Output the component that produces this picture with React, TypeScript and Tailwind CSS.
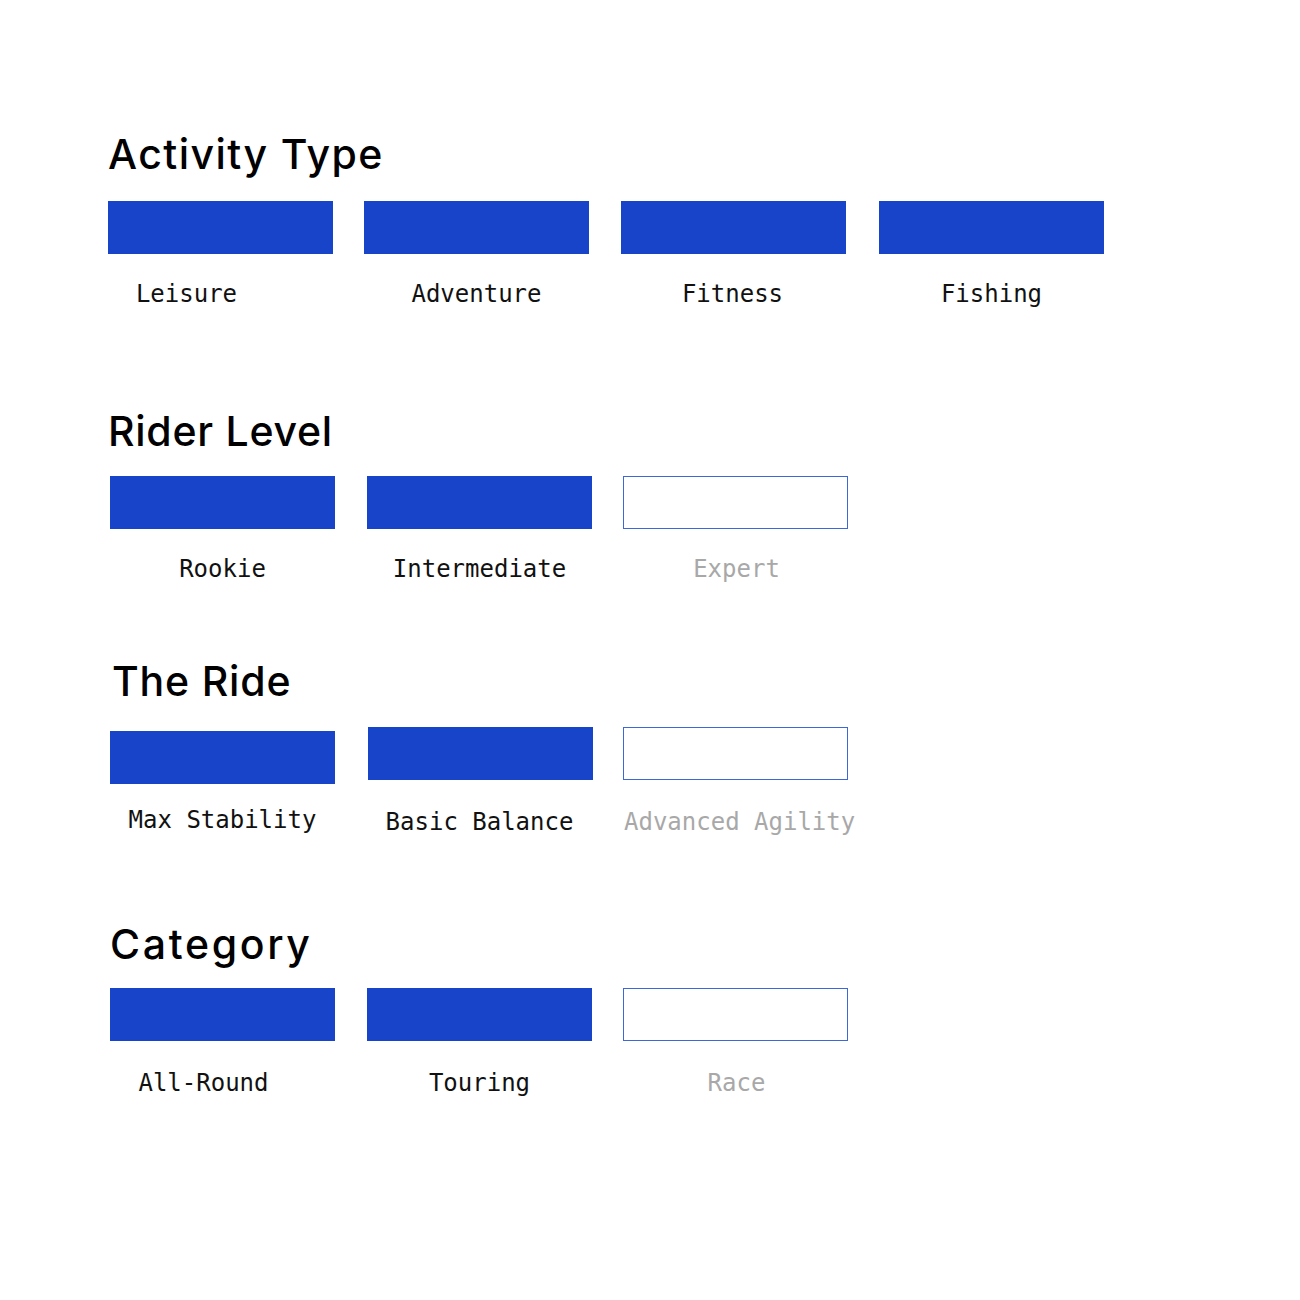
type Option = {
  label: string;
  active: boolean;
  boxClass?: string;
  labelClass?: string;
};

type Group = {
  title: string;
  sectionClass: string;
  titleClass: string;
  rowClass: string;
  options: Option[];
};

const groups: Group[] = [
  {
    title: "Activity Type",
    sectionClass: "mt-0",
    titleClass: "tracking-[0.035em]",
    rowClass: "mt-[26px] gap-x-[31px]",
    options: [
      { label: "Leisure", active: true, labelClass: "mt-[28px] pr-[68px]" },
      { label: "Adventure", active: true },
      { label: "Fitness", active: true, boxClass: "ml-px" },
      { label: "Fishing", active: true, boxClass: "ml-[3px]", labelClass: "mt-[28px] pl-[6px]" },
    ],
  },
  {
    title: "Rider Level",
    sectionClass: "mt-[105px]",
    titleClass: "tracking-[0.018em]",
    rowClass: "mt-[24px] ml-[2px] gap-x-[32px]",
    options: [
      { label: "Rookie", active: true },
      { label: "Intermediate", active: true },
      { label: "Expert", active: false, boxClass: "-ml-px" },
    ],
  },
  {
    title: "The Ride",
    sectionClass: "mt-[80px]",
    titleClass: "ml-[4px] tracking-[0.02em]",
    rowClass: "mt-[25px] ml-[2px] gap-x-[32px]",
    options: [
      { label: "Max Stability", active: true, boxClass: "mt-[4px]", labelClass: "mt-[24px]" },
      { label: "Basic Balance", active: true, boxClass: "ml-px", labelClass: "mt-[30px]" },
      {
        label: "Advanced Agility",
        active: false,
        boxClass: "-ml-px h-[53px]",
        labelClass: "mt-[30px] pr-[6px]",
      },
    ],
  },
  {
    title: "Category",
    sectionClass: "mt-[90px]",
    titleClass: "ml-[2px] tracking-[0.065em]",
    rowClass: "mt-[23px] ml-[2px] gap-x-[32px]",
    options: [
      { label: "All-Round", active: true, labelClass: "mt-[30px] pr-[38px]" },
      { label: "Touring", active: true, labelClass: "mt-[30px]" },
      { label: "Race", active: false, boxClass: "-ml-px", labelClass: "mt-[30px]" },
    ],
  },
];

const OptionTile = ({ option }: { option: Option }) => {
  return (
    <div className="flex w-[225px] flex-col">
      <div
        className={
          (option.active
            ? "bg-[#1844ca] "
            : "border border-[#3d66d8] bg-white ") +
          "h-[53px] w-[225px] " +
          (option.boxClass ?? "")
        }
      />
      <p
        className={
          "whitespace-nowrap text-center font-['DejaVu_Sans_Mono',monospace] text-[24px] leading-[24px] " +
          (option.active ? "text-[#111111] " : "text-[#a8a8a8] ") +
          (option.labelClass ?? "mt-[28px]")
        }
      >
        {option.label}
      </p>
    </div>
  );
};

export default function App() {
  return (
    <div className="min-h-[1300px] w-[1300px] bg-white px-[108px] pt-[134px]">
      {groups.map((group) => (
        <section key={group.title} className={group.sectionClass}>
          <h2
            className={
              "font-['Inter',sans-serif] text-[41px] font-medium leading-[41px] text-black " +
              group.titleClass
            }
          >
            {group.title}
          </h2>
          <div className={"flex " + group.rowClass}>
            {group.options.map((option) => (
              <OptionTile key={option.label} option={option} />
            ))}
          </div>
        </section>
      ))}
    </div>
  );
}
